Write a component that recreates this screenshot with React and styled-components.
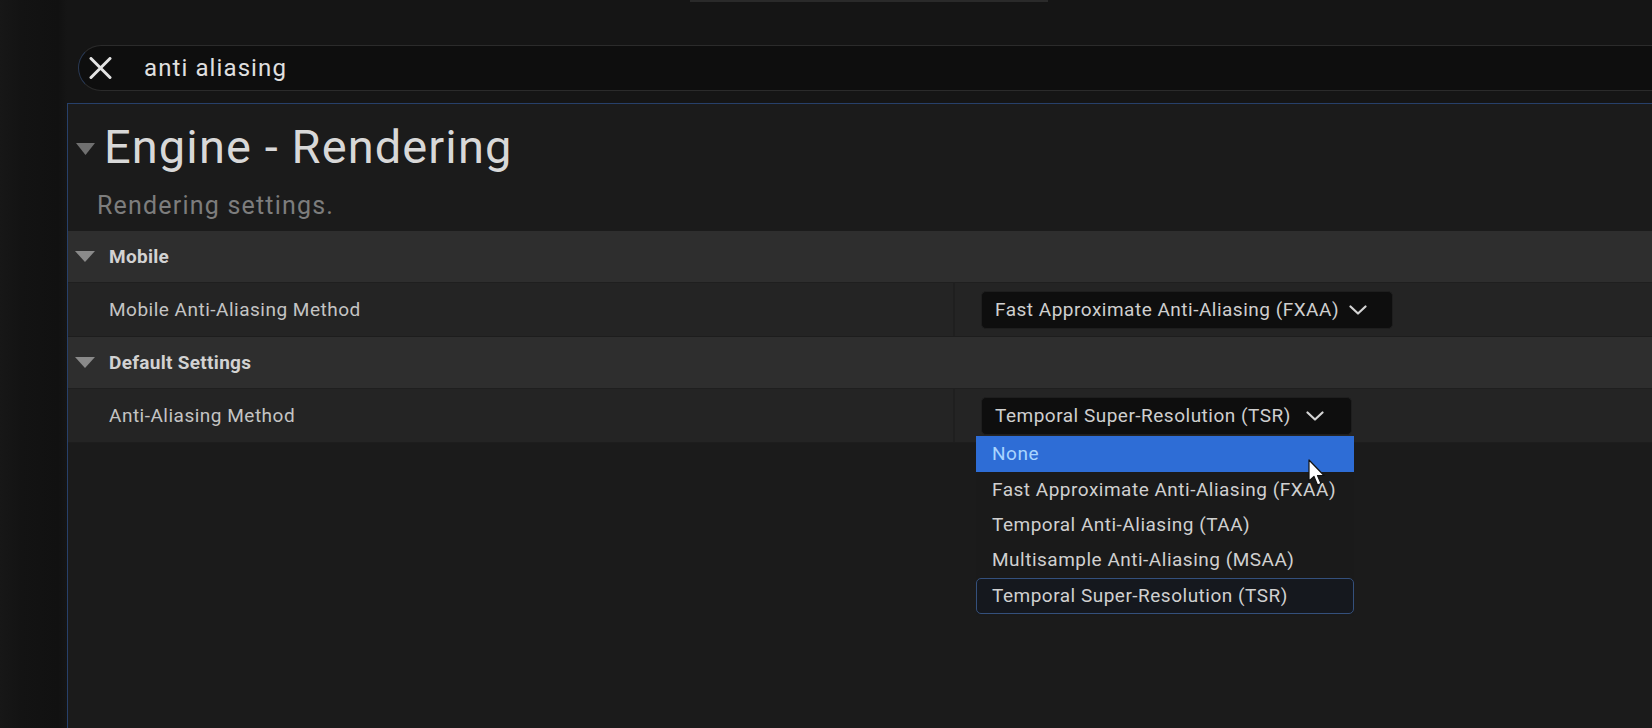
import React from 'react';
import styled, { createGlobalStyle } from 'styled-components';

const GlobalStyle = createGlobalStyle`
  html, body {
    margin: 0;
    padding: 0;
    background: #141414;
  }
  body {
    font-family: Roboto, "Noto Sans", "Liberation Sans", sans-serif;
    -webkit-font-smoothing: antialiased;
  }
`;

const Screen = styled.div`
  width: 1652px;
  height: 728px;
  overflow: hidden;
  display: flex;
  flex-direction: column;
  background: linear-gradient(90deg, #171717 0, #131313 22px, #111111 58px, #151515 67px);
`;

const TopStrip = styled.div`
  height: 45px;
  padding-left: 690px;
`;

const TabEdge = styled.div`
  width: 358px;
  height: 2px;
  background: #2a2a2a;
`;

const SearchRow = styled.div`
  padding-left: 78px;
`;

const SearchBox = styled.div`
  height: 44px;
  display: flex;
  align-items: center;
  gap: 32px;
  padding-left: 10px;
  background: #0e0e0e;
  border: 1px solid #2b2b2b;
  border-left-color: #2a3a55;
  border-right: none;
  border-radius: 23px 0 0 23px;
`;

const SearchText = styled.span`
  font-size: 24px;
  letter-spacing: 1.1px;
  color: #e0e0e0;
`;

const ClearIcon = () => (
  <svg width="23" height="22" viewBox="0 0 23 22">
    <path d="M2 1.5 L21 20.5 M21 1.5 L2 20.5" stroke="#e4e4e4" strokeWidth="3" strokeLinecap="round" />
  </svg>
);

const Panel = styled.div`
  flex: 1;
  margin: 12px 0 0 67px;
  background: #1b1b1b;
  border-top: 1px solid #27406a;
  border-left: 1px solid #27406a;
  display: flex;
  flex-direction: column;
`;

const TitleRow = styled.div`
  display: flex;
  align-items: center;
  gap: 9px;
  padding: 19px 0 0 8px;

  svg {
    margin-top: 4px;
  }
`;

const Title = styled.h1`
  margin: 0;
  font-size: 47px;
  line-height: 48px;
  font-weight: 400;
  letter-spacing: 1.1px;
  color: #d8d8d8;
`;

const Subtitle = styled.p`
  margin: 23px 0 13px 29px;
  font-size: 25px;
  line-height: 24px;
  letter-spacing: 1.2px;
  color: #7d7d7d;
`;

const Triangle = ({ w = 20, h = 11, color = '#8a8a8a' }) => (
  <svg width={w} height={h} viewBox={`0 0 ${w} ${h}`}>
    <polygon points={`0,0 ${w},0 ${w / 2},${h}`} fill={color} />
  </svg>
);

const CategoryHeader = styled.div`
  height: 51px;
  display: flex;
  align-items: center;
  gap: 14px;
  padding-left: 7px;
  background: #2e2e2e;
  border-bottom: 1px solid #1f1f1f;
`;

const CategoryName = styled.span`
  font-size: 19px;
  font-weight: 700;
  letter-spacing: 0.3px;
  color: #d2d2d2;
`;

const PropertyRow = styled.div`
  height: 53px;
  display: grid;
  grid-template-columns: 887px 1fr;
  background: #242424;
  border-bottom: 1px solid #1d1d1d;
`;

const NameCell = styled.div`
  display: flex;
  align-items: center;
  padding-left: 41px;
  border-right: 2px solid #1f1f1f;
  font-size: 19px;
  letter-spacing: 0.5px;
  color: #c4c4c4;
`;

const ValueCell = styled.div`
  display: flex;
  align-items: center;
  padding-left: 26px;
`;

const ComboAnchor = styled.div`
  position: relative;
`;

const ComboButton = styled.div`
  height: 36px;
  display: inline-flex;
  align-items: center;
  gap: ${(p) => p.$gap}px;
  padding: 0 ${(p) => p.$padRight}px 0 13px;
  background: #0e0e0e;
  border: 1px solid #1e1e1e;
  border-radius: 5px;
  font-size: 19px;
  letter-spacing: 0.5px;
  color: #cfcfcf;
  white-space: nowrap;
`;

const Chevron = () => (
  <svg width="18" height="10" viewBox="0 0 18 10">
    <path d="M1.5 1.5 L9 8.5 L16.5 1.5" fill="none" stroke="#d4d4d4" strokeWidth="2.2" strokeLinecap="round" strokeLinejoin="round" />
  </svg>
);

const Menu = styled.div`
  position: absolute;
  top: calc(100% + 1px);
  left: -5px;
  width: 378px;
  background: #1a1a1a;
  padding-bottom: 2px;
  z-index: 5;
`;

const MenuItem = styled.div`
  height: ${(p) => (p.$hover || p.$current ? 36 : 35)}px;
  margin-top: ${(p) => (p.$current ? 1 : 0)}px;
  display: flex;
  align-items: center;
  padding-left: 15px;
  box-sizing: border-box;
  font-size: 19px;
  letter-spacing: 0.5px;
  white-space: nowrap;
  color: ${(p) => (p.$hover ? '#a9d5ff' : '#d0d0d0')};
  background: ${(p) => (p.$hover ? '#2e6dd6' : p.$current ? '#15181e' : 'transparent')};
  border: 1px solid ${(p) => (p.$current ? '#34507c' : 'transparent')};
  border-radius: ${(p) => (p.$current ? 5 : 0)}px;
`;

const Cursor = styled.svg`
  position: absolute;
  left: 332px;
  top: 23px;
`;

const methods = [
  'None',
  'Fast Approximate Anti-Aliasing (FXAA)',
  'Temporal Anti-Aliasing (TAA)',
  'Multisample Anti-Aliasing (MSAA)',
  'Temporal Super-Resolution (TSR)',
];

function Combo({ value, padRight, gap, open }) {
  return (
    <ComboAnchor>
      <ComboButton $padRight={padRight} $gap={gap}>
        {value}
        <Chevron />
      </ComboButton>
      {open && (
        <Menu>
          {methods.map((m, i) => (
            <MenuItem key={m} $hover={i === 0} $current={m === value}>
              {m}
            </MenuItem>
          ))}
          <Cursor width="20" height="28" viewBox="0 0 20 28">
            <path d="M1 1 L1 22 L6 17.5 L9.5 26 L13 24.5 L9.5 16.5 L16 16.5 Z" fill="#ffffff" stroke="#111" strokeWidth="1.2" strokeLinejoin="round" />
          </Cursor>
        </Menu>
      )}
    </ComboAnchor>
  );
}

function Section({ name, label, value, padRight, gap = 10, open }) {
  return (
    <>
      <CategoryHeader>
        <Triangle />
        <CategoryName>{name}</CategoryName>
      </CategoryHeader>
      <PropertyRow>
        <NameCell>{label}</NameCell>
        <ValueCell>
          <Combo value={value} padRight={padRight} gap={gap} open={open} />
        </ValueCell>
      </PropertyRow>
    </>
  );
}

export default function App() {
  return (
    <Screen>
      <GlobalStyle />
      <TopStrip>
        <TabEdge />
      </TopStrip>
      <SearchRow>
        <SearchBox>
          <ClearIcon />
          <SearchText>anti aliasing</SearchText>
        </SearchBox>
      </SearchRow>
      <Panel>
        <TitleRow>
          <Triangle w={19} h={12} color="#707070" />
          <Title>Engine - Rendering</Title>
        </TitleRow>
        <Subtitle>Rendering settings.</Subtitle>
        <Section
          name="Mobile"
          label="Mobile Anti-Aliasing Method"
          value="Fast Approximate Anti-Aliasing (FXAA)"
          padRight={25}
        />
        <Section
          name="Default Settings"
          label="Anti-Aliasing Method"
          value="Temporal Super-Resolution (TSR)"
          padRight={27}
          gap={15}
          open
        />
      </Panel>
    </Screen>
  );
}
